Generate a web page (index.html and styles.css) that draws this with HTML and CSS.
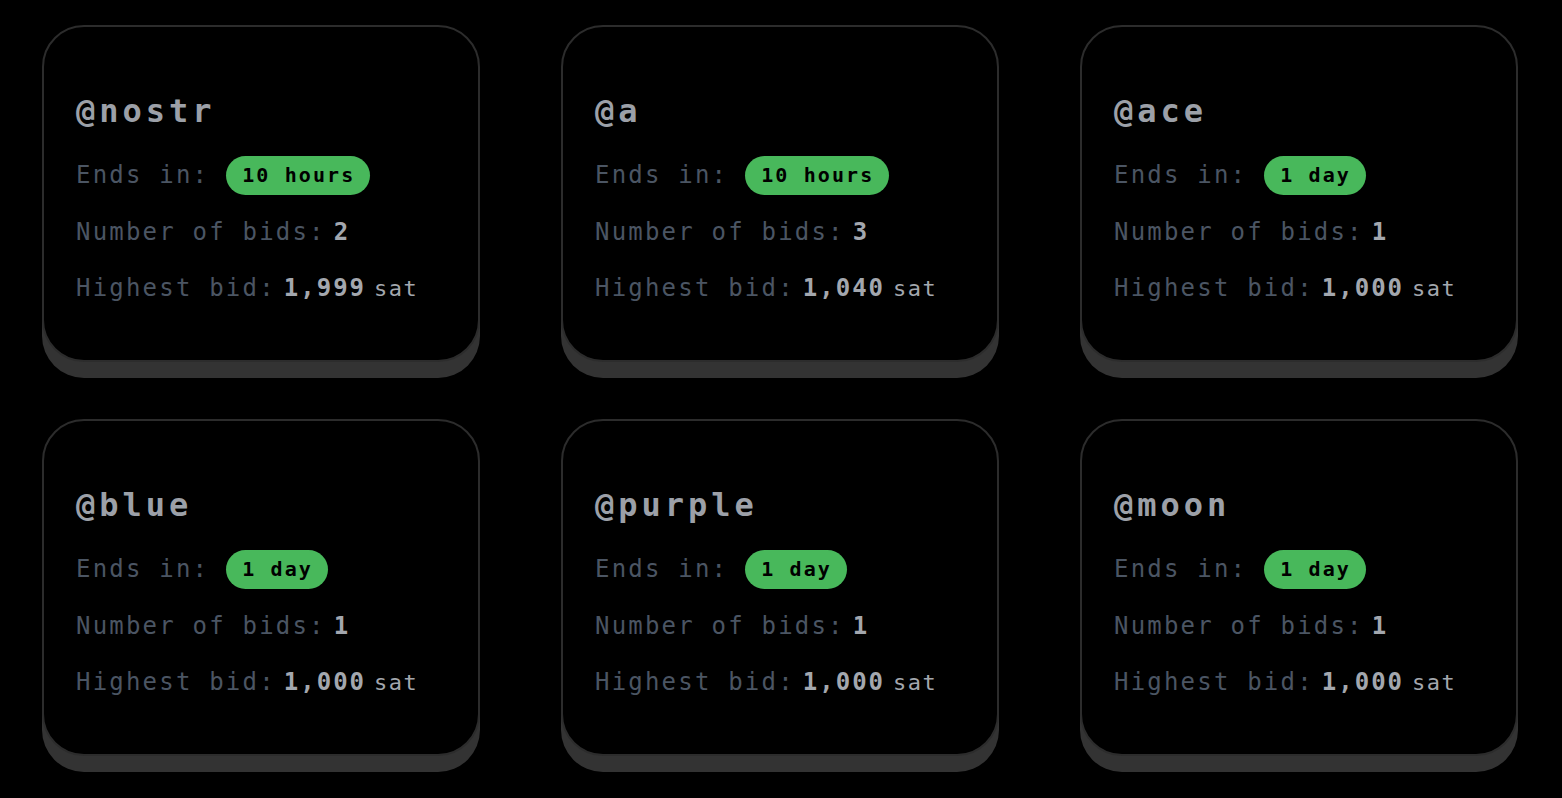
FILE: index.html
```html
<!DOCTYPE html>
<html>
<head>
<meta charset="utf-8">
<link rel="stylesheet" href="styles.css">
</head>
<body>
<div class="grid">
  <div class="card">
    <div class="title">@nostr</div>
    <div class="row"><span class="label">Ends in:</span><span class="pill">10 hours</span></div>
    <div class="row"><span class="label">Number of bids:</span><span class="value">2</span></div>
    <div class="row"><span class="label">Highest bid:</span><span class="value">1,999</span><span class="unit">sat</span></div>
  </div>
  <div class="card">
    <div class="title">@a</div>
    <div class="row"><span class="label">Ends in:</span><span class="pill">10 hours</span></div>
    <div class="row"><span class="label">Number of bids:</span><span class="value">3</span></div>
    <div class="row"><span class="label">Highest bid:</span><span class="value">1,040</span><span class="unit">sat</span></div>
  </div>
  <div class="card">
    <div class="title">@ace</div>
    <div class="row"><span class="label">Ends in:</span><span class="pill">1 day</span></div>
    <div class="row"><span class="label">Number of bids:</span><span class="value">1</span></div>
    <div class="row"><span class="label">Highest bid:</span><span class="value">1,000</span><span class="unit">sat</span></div>
  </div>
  <div class="card">
    <div class="title">@blue</div>
    <div class="row"><span class="label">Ends in:</span><span class="pill">1 day</span></div>
    <div class="row"><span class="label">Number of bids:</span><span class="value">1</span></div>
    <div class="row"><span class="label">Highest bid:</span><span class="value">1,000</span><span class="unit">sat</span></div>
  </div>
  <div class="card">
    <div class="title">@purple</div>
    <div class="row"><span class="label">Ends in:</span><span class="pill">1 day</span></div>
    <div class="row"><span class="label">Number of bids:</span><span class="value">1</span></div>
    <div class="row"><span class="label">Highest bid:</span><span class="value">1,000</span><span class="unit">sat</span></div>
  </div>
  <div class="card">
    <div class="title">@moon</div>
    <div class="row"><span class="label">Ends in:</span><span class="pill">1 day</span></div>
    <div class="row"><span class="label">Number of bids:</span><span class="value">1</span></div>
    <div class="row"><span class="label">Highest bid:</span><span class="value">1,000</span><span class="unit">sat</span></div>
  </div>
</div>
</body>
</html>
```
FILE: styles.css
```css
html, body {
  margin: 0;
  padding: 0;
  background: #000;
}
body {
  min-height: 798px;
  font-family: "DejaVu Sans Mono", "Liberation Mono", monospace;
}
.grid {
  display: grid;
  grid-template-columns: repeat(3, 438px);
  column-gap: 81px;
  row-gap: 57px;
  padding: 25px 44px 30px 42px;
}
.card {
  box-sizing: border-box;
  height: 337px;
  border: 2px solid #2c2c2c;
  border-radius: 42px;
  background: #000;
  box-shadow: 0 16px 0 0 #333333;
  padding: 64px 20px 0 32px;
}
.title {
  font-size: 32px;
  line-height: 40px;
  font-weight: bold;
  letter-spacing: 4px;
  color: #9ca0a8;
  margin-bottom: 16px;
}
.row {
  height: 56.5px;
  display: flex;
  align-items: center;
  white-space: nowrap;
}
.label {
  font-size: 24px;
  letter-spacing: 2.2px;
  color: #4b5563;
}
.value {
  font-size: 24px;
  letter-spacing: 2px;
  font-weight: bold;
  color: #a3a7ae;
  margin-left: 8px;
}
.unit {
  font-size: 22px;
  letter-spacing: 1.5px;
  color: #a3a7ae;
  margin-left: 8px;
}
.pill {
  margin-left: 17px;
  height: 39px;
  box-sizing: border-box;
  display: inline-flex;
  align-items: center;
  padding: 0 15px 0 16px;
  border-radius: 20px;
  background: #48b85b;
  color: #000;
  font-size: 20px;
  font-weight: bold;
  letter-spacing: 2.1px;
}
```
